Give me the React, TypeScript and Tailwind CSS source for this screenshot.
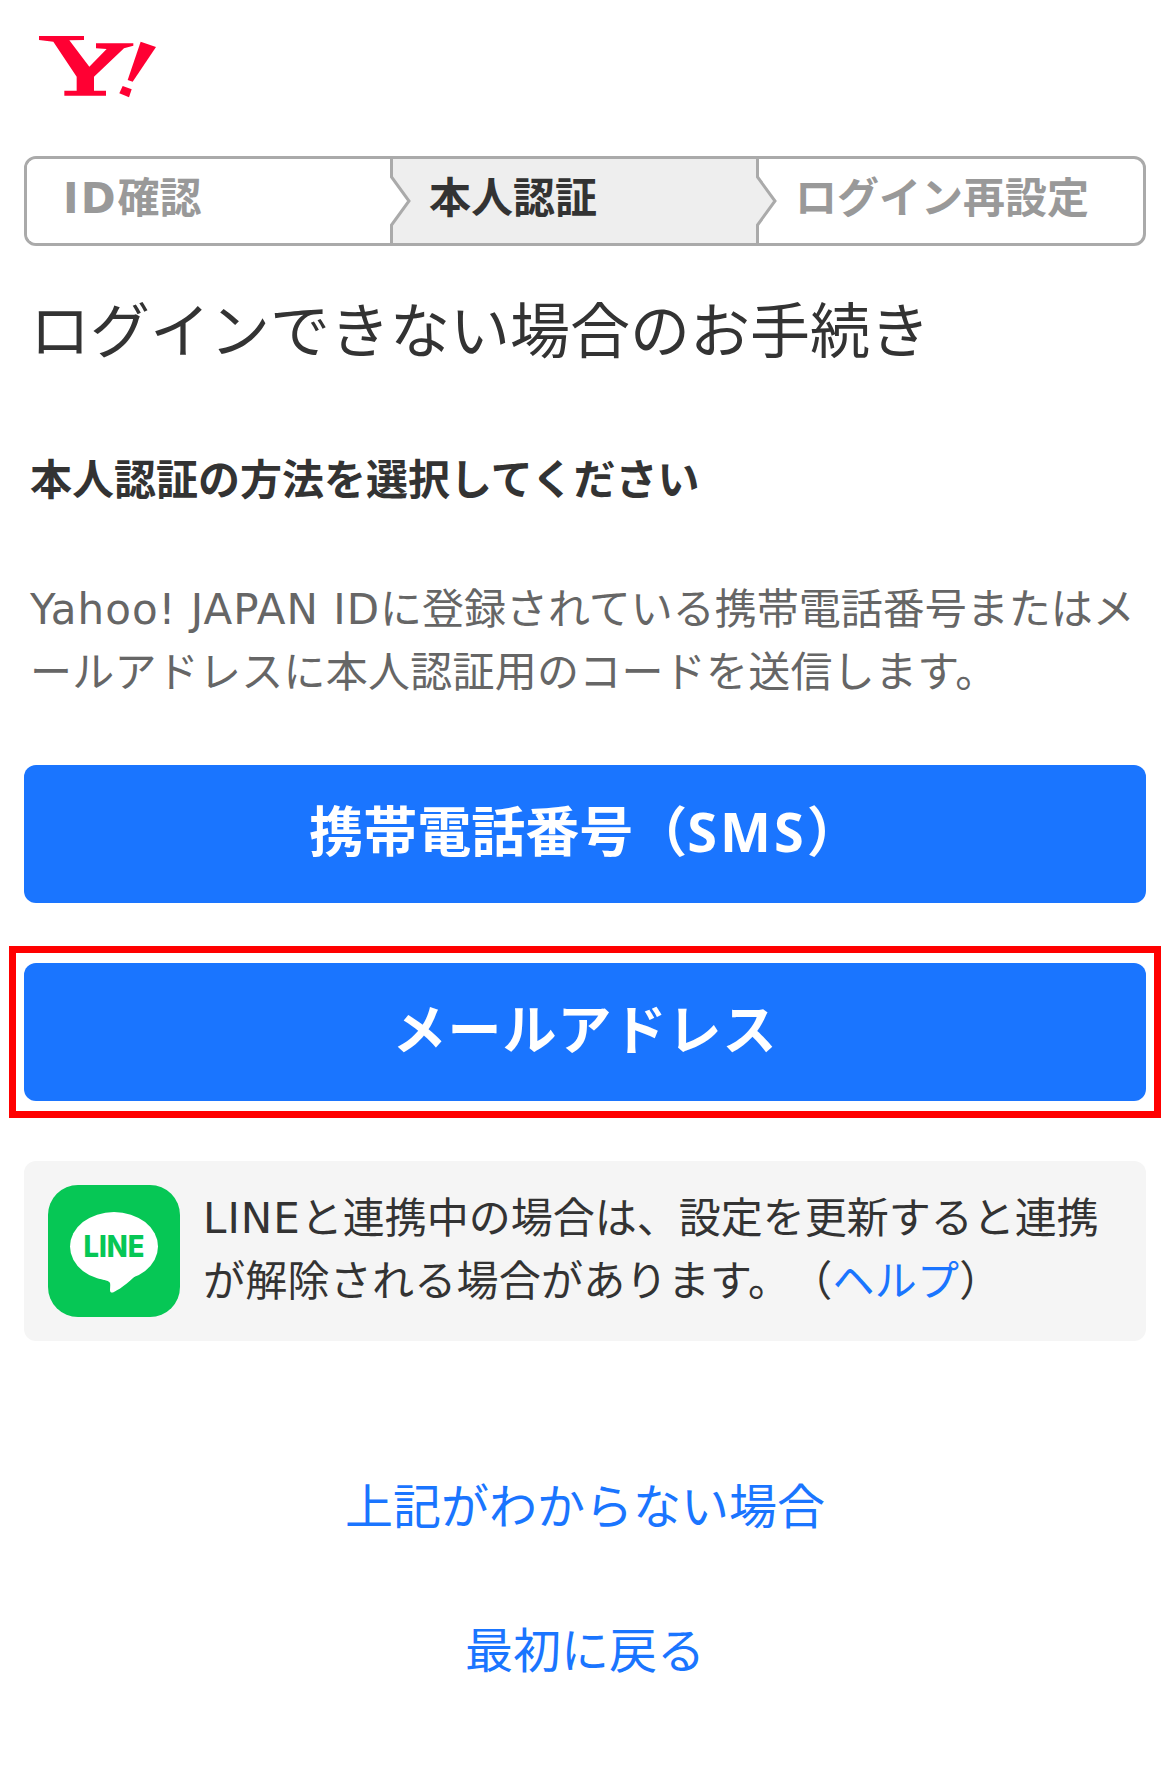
const font = "font-['DejaVu_Sans','Noto_Sans_CJK_JP',sans-serif] [text-spacing-trim:space-all]"

function YahooLogo() {
  return (
    <svg width="135" height="80" viewBox="0 0 405 240" className="ml-[6px] block">
      <path
        fill="#ff0033"
        d="M27 33H162V45L118 46L178 125L230 72L198 70V55H310V62L282 70L192 155V197H228V212H103V197H140V155L70 50L27 45Z"
      />
      <path fill="#ff0033" d="M332 50L378 66L308 170L293 165Z" />
      <path fill="#ff0033" d="M278 183L305 193L297 217L268 205Z" />
    </svg>
  )
}

function LineIcon() {
  return (
    <svg width="132" height="132" viewBox="0 0 132 132" className="shrink-0">
      <rect width="132" height="132" rx="30" fill="#06c755" />
      <ellipse cx="66" cy="61.5" rx="44" ry="34.5" fill="#fff" />
      <path
        fill="#fff"
        d="M50 93C58 95 61 96 62 98C62.500 100 62 103 62 105C62 108 64 108 66 107C74 103 84 95 94 84Z"
      />
      <text
        x="66"
        y="72"
        textAnchor="middle"
        textLength="61"
        lengthAdjust="spacingAndGlyphs"
        fontFamily="Inter, sans-serif"
        fontWeight="800"
        fontSize="30"
        fill="#06c755"
      >
        LINE
      </text>
    </svg>
  )
}

function Chevron({ fill }: { fill: string }) {
  return (
    <svg width="24" height="84" viewBox="0 0 24 84" className="absolute top-0 right-[-21px] z-10">
      <path d="M1.500 0V18L19 42L1.500 66V84" fill={fill} stroke="#aaaaaa" strokeWidth="3" />
    </svg>
  )
}

function Stepper() {
  return (
    <div className="flex h-[90px] rounded-[12px] border-[3px] border-[#aaaaaa] text-[42px] font-bold leading-[80px]">
      <div className="relative w-[366px] shrink-0 rounded-l-[9px] bg-white pl-[36px] text-[#999999]">
        <span className="tracking-[2px]">ID</span>確認
        <Chevron fill="#ffffff" />
      </div>
      <div className="relative w-[366px] shrink-0 bg-[#eeeeee] pl-[36px] text-[#333333]">
        本人認証
        <Chevron fill="#eeeeee" />
      </div>
      <div className="flex-1 pl-[36px] text-[#999999]">ログイン再設定</div>
    </div>
  )
}

export default function App() {
  return (
    <div className={`${font} relative min-h-[1788px] bg-white px-[24px] pt-[25px]`}>
      <YahooLogo />
      <div className="mt-[51px]">
        <Stepper />
      </div>

      <h1 className="mt-[41px] pl-[6px] text-[60px] font-normal leading-[90px] text-[#333333]">
        ログインできない場合のお手続き
      </h1>
      <h2 className="mt-[72px] pl-[6px] text-[42px] font-bold leading-[63px] text-[#333333]">
        本人認証の方法を選択してください
      </h2>
      <p className="mt-[66px] pl-[6px] text-[42px] leading-[63px] text-[#666666]">
        <span className="tracking-[1px]">Yahoo! JAPAN ID</span>に登録されている携帯電話番号またはメ
        <br />
        <span className="tracking-[0.25px]">ールアドレスに本人認証用のコードを送信します。</span>
      </p>

      <button className="mt-[61px] block h-[138px] w-full rounded-[12px] bg-[#1a75ff] pb-[3px] text-[54px] font-bold text-white">
        携帯電話番号（<span className="font-['Noto_Sans'] tracking-[3px]">SMS</span>）
      </button>
      <div className="relative mt-[60px]">
        <button className="block h-[138px] w-full rounded-[12px] bg-[#1a75ff] pb-[2px] text-[54px] font-bold tracking-[1px] text-white">
          メールアドレス
        </button>
        <div className="absolute inset-x-[-15px] inset-y-[-17px] border-[7px] border-[#ff0000]" />
      </div>

      <div className="mt-[60px] flex h-[180px] items-center gap-[23px] rounded-[12px] bg-[#f5f5f5] px-[24px]">
        <LineIcon />
        <p className="whitespace-nowrap pb-[2px] text-[42px] leading-[63px] text-[#333333]">
          <span className="tracking-[1px]">LINE</span>と連携中の場合は、設定を更新すると連携
          <br />
          <span className="tracking-[0.25px]">
            が解除される場合があります。（<a className="text-[#1a75ff]">ヘルプ</a>）
          </span>
        </p>
      </div>

      <a className="mt-[130px] block text-center text-[48px] leading-[72px] text-[#1a75ff]">上記がわからない場合</a>
      <a className="mt-[72px] block text-center text-[48px] leading-[72px] text-[#1a75ff]">最初に戻る</a>
    </div>
  )
}
